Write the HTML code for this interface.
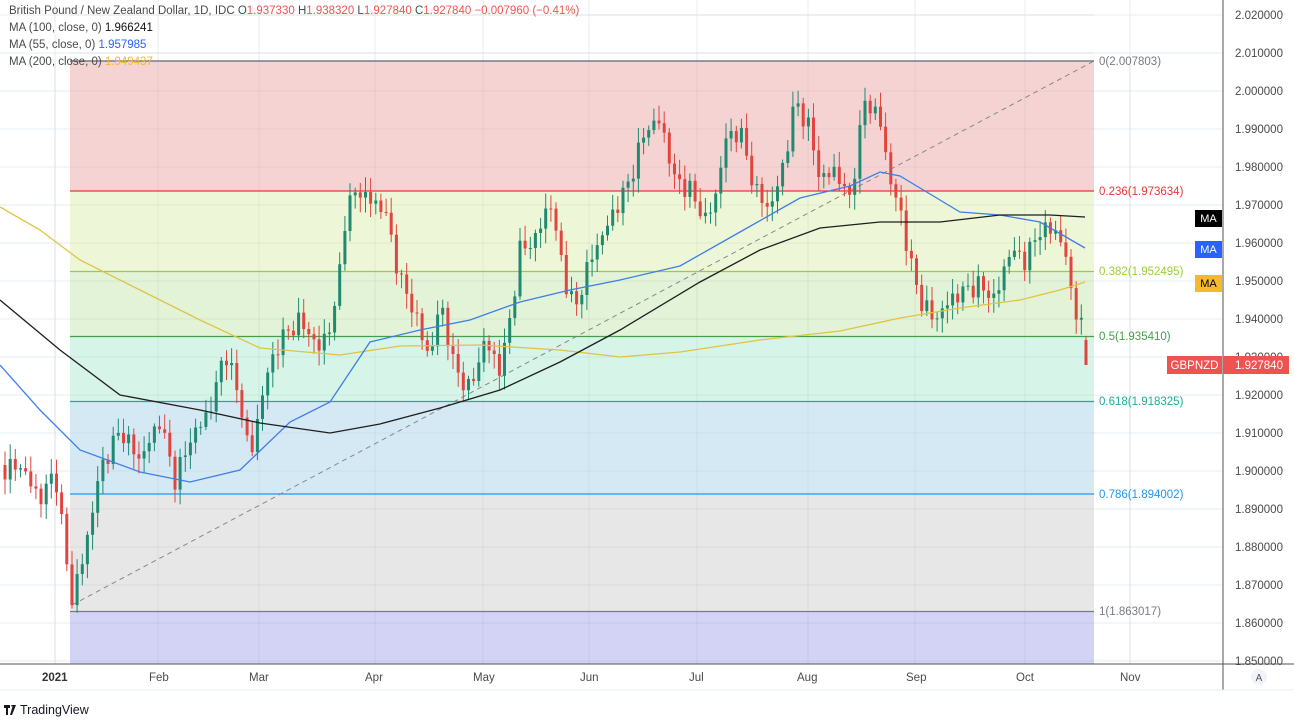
<!DOCTYPE html>
<html><head><meta charset="utf-8"><style>
body{margin:0;width:1294px;height:720px;background:#fff;overflow:hidden;font-family:"Liberation Sans",sans-serif}
svg{position:absolute;left:0;top:0}
</style></head><body>
<svg id="s" width="1294" height="720" xmlns="http://www.w3.org/2000/svg" font-family="Liberation Sans, sans-serif">
<g id="grid" stroke="#e6ecf2" stroke-width="1"></g>
<rect x="70" y="61" width="1024" height="130" fill="#f5d3d3"/>
<rect x="70" y="191" width="1024" height="80.5" fill="#eef6d8"/>
<rect x="70" y="271.5" width="1024" height="65" fill="#e2f3d8"/>
<rect x="70" y="336.5" width="1024" height="65" fill="#d6f4e8"/>
<rect x="70" y="401.5" width="1024" height="92.5" fill="#d5e9f5"/>
<rect x="70" y="494" width="1024" height="117.5" fill="#e7e7e7"/>
<rect x="70" y="611.5" width="1024" height="52.5" fill="#d2d3f5"/>
<g id="grid2" stroke="#000" stroke-opacity="0.05" stroke-width="1"></g>
<line x1="70" y1="61" x2="1094" y2="61" stroke="#787b86" stroke-width="1.5"/>
<line x1="70" y1="191" x2="1094" y2="191" stroke="#e53935" stroke-width="1.2"/>
<line x1="70" y1="271.5" x2="1094" y2="271.5" stroke="#9ccc3a" stroke-width="1.2"/>
<line x1="70" y1="336.5" x2="1094" y2="336.5" stroke="#43a047" stroke-width="1.2"/>
<line x1="70" y1="401.5" x2="1094" y2="401.5" stroke="#22ab94" stroke-width="1.2"/>
<line x1="70" y1="494" x2="1094" y2="494" stroke="#2196f3" stroke-width="1.2"/>
<line x1="70" y1="611.5" x2="1094" y2="611.5" stroke="#787b86" stroke-width="1.2"/>
<line x1="72" y1="605" x2="1094" y2="61" stroke="#888" stroke-dasharray="5,4" stroke-width="1"/>
<g id="candles"></g>
<polyline fill="none" stroke="#e0c441" stroke-width="1.3" points="0,207 40,230 80,260 140,290 200,320 260,348 340,355 400,346 480,345 560,350 620,357 680,352 760,340 840,331 900,318 960,308 1020,300 1060,290 1085,282"/>
<polyline fill="none" stroke="#3d7ee6" stroke-width="1.3" points="0,365 40,410 80,450 140,472 190,482 240,470 290,422 330,402 370,342 420,330 470,320 520,302 570,290 620,280 680,266 740,232 800,198 850,186 880,172 900,176 920,188 960,212 1000,215 1040,222 1085,248"/>
<polyline fill="none" stroke="#1e1e1e" stroke-width="1.3" points="0,300 60,350 120,395 200,410 260,423 330,433 380,424 440,408 500,390 560,362 620,330 700,282 760,250 820,228 880,222 940,222 1000,215 1050,215 1085,217"/>
<g font-size="11.5">
<text x="1099" y="65" fill="#787b86">0(2.007803)</text>
<text x="1099" y="195" fill="#e53935">0.236(1.973634)</text>
<text x="1099" y="275" fill="#9ccc3a">0.382(1.952495)</text>
<text x="1099" y="340" fill="#43a047">0.5(1.935410)</text>
<text x="1099" y="405" fill="#22ab94">0.618(1.918325)</text>
<text x="1099" y="498" fill="#2196f3">0.786(1.894002)</text>
<text x="1099" y="615" fill="#787b86">1(1.863017)</text>
</g>
<rect x="1195" y="210" width="27" height="17" fill="#000"/><text x="1208.5" y="222" font-size="11" fill="#fff" text-anchor="middle">MA</text>
<rect x="1195" y="241" width="27" height="17" fill="#2962ff"/><text x="1208.5" y="253" font-size="11" fill="#fff" text-anchor="middle">MA</text>
<rect x="1195" y="275" width="27" height="17" fill="#f5b82e"/><text x="1208.5" y="287" font-size="11" fill="#000" text-anchor="middle">MA</text>
<rect x="1167" y="356" width="55" height="18" fill="#ef5350"/><text x="1194.5" y="369" font-size="11.5" fill="#fff" text-anchor="middle">GBPNZD</text>
<line x1="1223" y1="0" x2="1223" y2="690" stroke="#50535e" stroke-width="1"/>
<line x1="0" y1="664" x2="1294" y2="664" stroke="#50535e" stroke-width="1"/>
<line x1="0" y1="690" x2="1294" y2="690" stroke="#e6ecf2" stroke-width="1"/>
<g id="axis" font-size="11.5" fill="#4a4a4a"></g>
<rect x="1223" y="356" width="66" height="18" fill="#ef5350"/><text x="1235" y="369" font-size="11.5" fill="#fff">1.927840</text>
<g font-size="11.5" fill="#4a4a4a">
<text x="42" y="681" font-weight="bold" fill="#333">2021</text>
<text x="149" y="681">Feb</text><text x="249" y="681">Mar</text><text x="365" y="681">Apr</text>
<text x="473" y="681">May</text><text x="580" y="681">Jun</text><text x="689" y="681">Jul</text>
<text x="797" y="681">Aug</text><text x="906" y="681">Sep</text><text x="1016" y="681">Oct</text><text x="1120" y="681">Nov</text>
</g>
<circle cx="1259" cy="677" r="8" fill="#f0f3fa"/><text x="1259" y="681" font-size="10" fill="#555" text-anchor="middle">A</text>
<g font-size="11.5">
<text x="9" y="14" fill="#4a4a4a">British Pound / New Zealand Dollar, 1D, IDC  O<tspan fill="#ef5350">1.937330</tspan>  H<tspan fill="#ef5350">1.938320</tspan>  L<tspan fill="#ef5350">1.927840</tspan>  C<tspan fill="#ef5350">1.927840  −0.007960 (−0.41%)</tspan></text>
<text x="9" y="31" fill="#4a4a4a">MA (100, close, 0)  <tspan fill="#111">1.966241</tspan></text>
<text x="9" y="48" fill="#4a4a4a">MA (55, close, 0)  <tspan fill="#2962ff">1.957985</tspan></text>
<text x="9" y="65" fill="#4a4a4a">MA (200, close, 0)  <tspan fill="#f5b82e">1.949437</tspan></text>
</g>
<g transform="translate(4,704)"><path d="M0 1h6v3h-2v7h-2V4H0z M7 1h2l-1 2z M9 1h3l-4 10h-2z" fill="#131722"/></g>
<text x="20" y="714" font-size="12.5" fill="#131722">TradingView</text>
</svg>
<script>
(function(){
var NS="http://www.w3.org/2000/svg";
function el(p,t,a){var e=document.createElementNS(NS,t);for(var k in a)e.setAttribute(k,a[k]);document.getElementById(p).appendChild(e);return e;}
var mx=[55,158,259,375,483,589,697,808,915,1025,1130];
for(var i=0;i<mx.length;i++){el('grid','line',{x1:mx[i],y1:0,x2:mx[i],y2:664});el('grid2','line',{x1:mx[i],y1:61,x2:mx[i],y2:664});}
for(var j=0;j<=17;j++){var y=15+j*38;el('grid','line',{x1:0,y1:y,x2:1223,y2:y});el('grid2','line',{x1:70,y1:y,x2:1094,y2:y});
 var t=el('axis','text',{x:1235,y:y+4});t.textContent=(2.02-j*0.01).toFixed(6);}
var w=[[5,470],[20,465],[40,500],[55,470],[65,550],[72,600],[85,550],[100,470],[120,430],[140,460],[160,420],[175,480],[190,440],[210,410],[225,350],[240,400],[250,460],[265,380],[280,340],[300,320],[320,350],[335,310],[345,220],[355,190],[370,200],[385,210],[400,280],[410,300],[420,330],[430,360],[440,300],[455,370],[470,390],[485,340],[500,370],[510,320],[520,250],[535,240],[550,200],[565,280],[575,310],[590,260],[600,240],[615,210],[630,180],[645,130],[660,120],[675,180],[690,190],[705,220],[715,200],[725,140],[740,130],[755,190],[770,210],[785,160],[795,100],[810,130],[820,180],[835,170],[850,200],[865,100],[880,120],[890,180],[900,210],[910,260],[920,300],[935,320],[950,300],[965,290],[980,285],[995,300],[1010,250],[1025,260],[1040,230],[1055,230],[1065,250],[1072,300],[1080,320],[1086,340]];
function at(x){for(var i=0;i<w.length-1;i++){if(x>=w[i][0]&&x<=w[i+1][0]){var f=(x-w[i][0])/(w[i+1][0]-w[i][0]);return w[i][1]+f*(w[i+1][1]-w[i][1]);}}return w[w.length-1][1];}
var prev=at(5)-5,x;
for(x=5;x<=1082;x+=5.15){
 var c=at(x)+Math.sin(x*1.7)*7+Math.sin(x*0.37)*4;
 var o=prev; var top=Math.min(o,c),bot=Math.max(o,c);
 var hi=top-3-Math.abs(Math.sin(x*2.3))*12, lo=bot+3+Math.abs(Math.cos(x*1.9))*12;
 var col=c<o?'#1f8a70':'#e0453f';
 el('candles','line',{x1:x.toFixed(1),y1:hi.toFixed(1),x2:x.toFixed(1),y2:lo.toFixed(1),stroke:col,'stroke-width':1});
 el('candles','rect',{x:(x-1.5).toFixed(1),y:top.toFixed(1),width:3,height:Math.max(1,bot-top).toFixed(1),fill:col});
 prev=c;
}
el('candles','line',{x1:1086,y1:336,x2:1086,y2:365,stroke:'#e0453f','stroke-width':1});
el('candles','rect',{x:1084.5,y:340,width:3,height:25,fill:'#e0453f'});
})();
</script>
</body></html>
